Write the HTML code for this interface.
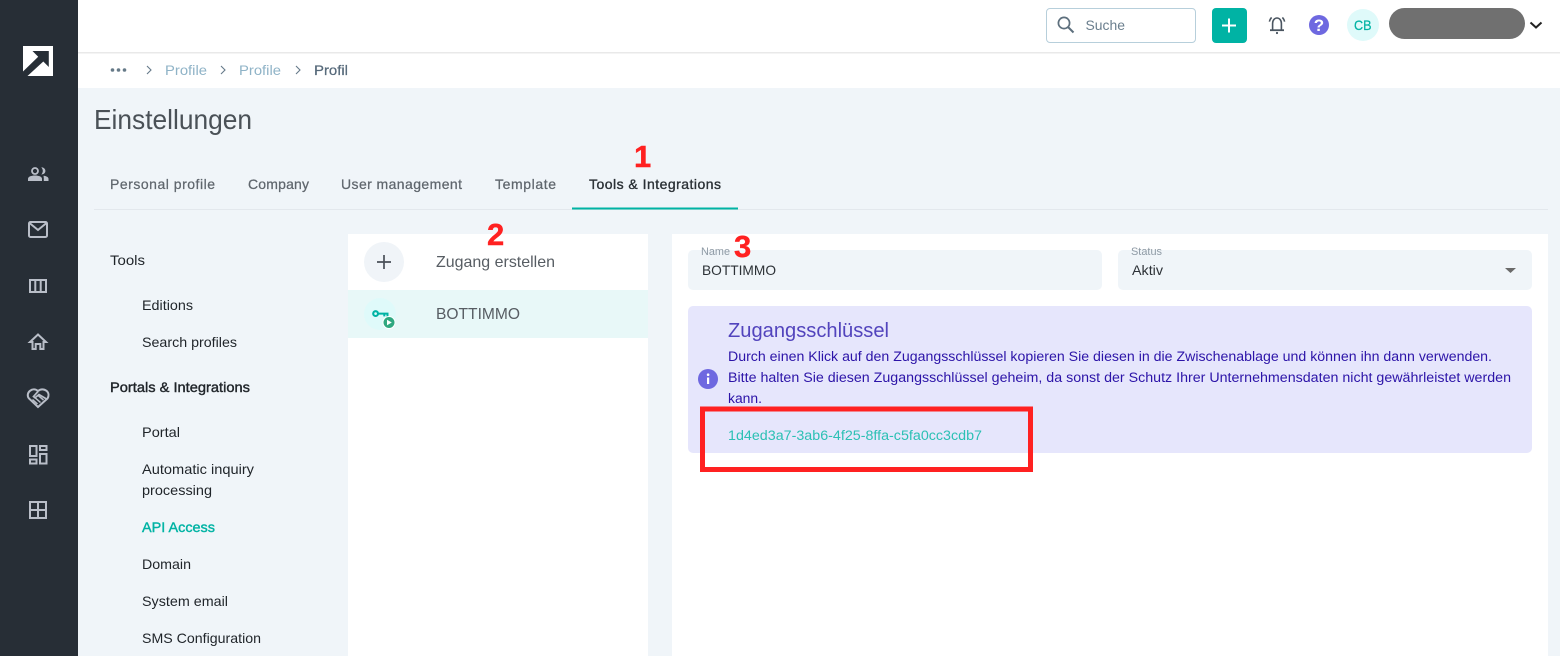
<!DOCTYPE html>
<html lang="de">
<head>
<meta charset="utf-8">
<title>Einstellungen</title>
<style>
html,body{margin:0;padding:0;width:1560px;height:656px;overflow:hidden;background:#f0f5f9}
svg{display:block}
text{font-family:"Liberation Sans",Arial,sans-serif;white-space:pre}
.m{stroke-width:.25px}
</style>
</head>
<body>
<svg width="1560" height="656" viewBox="0 0 1560 656" xmlns="http://www.w3.org/2000/svg">
  <rect width="1560" height="656" fill="#f0f5f9"/>
  <!-- top and breadcrumb -->
  <rect x="78" y="0" width="1482" height="88" fill="#fff"/>
  <rect x="78" y="52" width="1482" height="1.5" fill="#e9e9e9"/>
  <!-- sidebar -->
  <rect width="78" height="656" fill="#272e36"/>
  <rect x="23" y="46" width="30" height="30" fill="#fff"/>
  <path d="M32.5 51H48.8V67L43.3 61.5L27.5 76H23V71.5L38.2 56.7Z" fill="#272e36"/>
  <!-- people -->
  <circle cx="35" cy="171" r="3" fill="none" stroke="#b9bec8" stroke-width="1.8"/>
  <path d="M28 181V178.7C28 176.6 31.5 175.5 35 175.5S42 176.6 42 178.7V181Z" fill="#b9bec8"/>
  <path d="M41.3 167.2C44 167.4 45.4 169 45.4 170.9S44 174.4 41.3 174.6C42.5 173 42.8 172 42.8 170.9S42.5 168.8 41.3 167.2Z" fill="#b9bec8"/>
  <path d="M43.5 175.7C46.8 176 48.5 177.2 48.5 178.8V181H43.8V178.5C43.8 177.3 43.6 176.5 43.5 175.7Z" fill="#b9bec8"/>
  <g fill="none" stroke="#b9bec8" stroke-width="2">
    <!-- mail -->
    <rect x="29" y="222" width="18" height="15" rx="1.5"/>
    <path d="M29.5 223L38 230L46.5 223"/>
    <!-- columns -->
    <rect x="30" y="280" width="16" height="12"/>
    <path d="M35.3 280V292M40.7 280V292"/>
    <!-- home -->
    <path d="M30 342L38 334.5L46 342H43.5V349H40.3V344H35.7V349H32.5V342Z"/>
    <!-- handshake -->
    <path d="M38 407L29 398.5C27 396 27.5 392.8 30 390.8C32.5 388.8 35.5 388.8 38 391C40.5 388.8 44 388.8 46.5 390.8C49 393 49 396 47.5 398.5Z"/>
    <path d="M38 391.5L33.5 396.5L35 397.8L39 394.5L46.5 399" stroke-width="1.7"/>
    <path d="M32.5 399.5L37.5 404M35.2 397.8L40.5 402.5M38.2 395.5L43.5 400" stroke-width="1.5"/>
    <!-- dashboard -->
    <rect x="30" y="446" width="6.5" height="10"/>
    <rect x="40" y="446" width="6.5" height="4"/>
    <rect x="40" y="454" width="6.5" height="9.5"/>
    <rect x="30" y="459.5" width="6.5" height="4"/>
    <!-- grid -->
    <rect x="30" y="502" width="16" height="16"/>
    <path d="M38 502V518M30 510H46"/>
  </g>

  <!-- header controls -->
  <rect x="1046.5" y="8.5" width="149" height="34" rx="3.5" fill="#fff" stroke="#b7cfdb"/>
  <circle cx="1064" cy="23" r="5.6" fill="none" stroke="#5d6f7d" stroke-width="1.7"/>
  <path d="M1068 27L1073.5 32.5" stroke="#5d6f7d" stroke-width="2" fill="none"/>
  <text x="1085.5" y="30" font-size="14" fill="#6b7f8e" textLength="39.5" lengthAdjust="spacingAndGlyphs">Suche</text>
  <rect x="1212" y="8" width="35" height="35" rx="4" fill="#00b3a4"/>
  <path d="M1229 18.5V32.5M1222 25.5H1236" stroke="#fff" stroke-width="2"/>
  <g fill="none" stroke="#4a5560" stroke-width="1.6">
    <path d="M1272.6 29.5V23.5C1272.6 20.2 1274.6 18 1277 18S1281.4 20.2 1281.4 23.5V29.5"/>
    <path d="M1270 30.2H1284" stroke-width="1.8"/>
    <path d="M1269.4 21.6C1269.7 20 1270.4 18.7 1271.6 17.4M1284.6 21.6C1284.3 20 1283.6 18.7 1282.4 17.4"/>
  </g>
  <circle cx="1277" cy="33" r="1.1" fill="#4a5560"/>
  <circle cx="1319" cy="25" r="10" fill="#6e68e0"/>
  <text x="1319" y="31" font-size="17" font-weight="bold" fill="#fff" text-anchor="middle">?</text>
  <circle cx="1363" cy="25" r="16" fill="#dffafa"/>
  <text x="1354" y="30" font-size="14" fill="#00b3a4" stroke="#00b3a4" class="m" textLength="17.5" lengthAdjust="spacingAndGlyphs">CB</text>
  <rect x="1389" y="8" width="136" height="31" rx="15.5" fill="#707070"/>
  <path d="M1530.5 22.5L1536 27.5L1541.5 22.5" fill="none" stroke="#222" stroke-width="2"/>

  <!-- breadcrumb -->
  <circle cx="112.5" cy="70" r="1.8" fill="#667a88"/><circle cx="118.5" cy="70" r="1.8" fill="#667a88"/><circle cx="124.5" cy="70" r="1.8" fill="#667a88"/>
  <g fill="none" stroke="#66798a" stroke-width="1.1">
    <path d="M147 66L151 70L147 74M221 66L225 70L221 74M296 66L300 70L296 74"/>
  </g>
  <text x="165" y="75" font-size="14" fill="#8fb3c7" textLength="42" lengthAdjust="spacingAndGlyphs">Profile</text>
  <text x="239" y="75" font-size="14" fill="#8fb3c7" textLength="42" lengthAdjust="spacingAndGlyphs">Profile</text>
  <text x="314" y="75" font-size="14" fill="#56697a" stroke="#56697a" class="m" textLength="34" lengthAdjust="spacingAndGlyphs">Profil</text>

  <text x="94" y="129" font-size="28" fill="#4a5157" textLength="158" lengthAdjust="spacingAndGlyphs">Einstellungen</text>

  <!-- tabs -->
  <g font-size="14" fill="#5f666d" stroke="#5f666d" class="m">
    <text x="110" y="189" class="m" textLength="105" lengthAdjust="spacing">Personal profile</text>
    <text x="248" y="189" class="m" textLength="61" lengthAdjust="spacing">Company</text>
    <text x="341" y="189" class="m" textLength="121" lengthAdjust="spacing">User management</text>
    <text x="495" y="189" class="m" textLength="61" lengthAdjust="spacing">Template</text>
  </g>
  <text x="589" y="189" font-size="14" fill="#2b3136" stroke="#2b3136" stroke-width=".35" textLength="132" lengthAdjust="spacing">Tools &amp; Integrations</text>
  <rect x="94" y="209" width="1454" height="1" fill="#e3e8ed"/>
  <rect x="572" y="207.5" width="166" height="2" fill="#00b3a4"/>

  <!-- left menu -->
  <g font-size="14" fill="#1f2429">
    <text x="110" y="265" textLength="35" lengthAdjust="spacingAndGlyphs">Tools</text>
    <text x="142" y="310" textLength="51" lengthAdjust="spacingAndGlyphs">Editions</text>
    <text x="142" y="347" textLength="95" lengthAdjust="spacingAndGlyphs">Search profiles</text>
    <text x="110" y="392" stroke="#23282d" stroke-width=".4" textLength="140" lengthAdjust="spacingAndGlyphs">Portals &amp; Integrations</text>
    <text x="142" y="437" textLength="38" lengthAdjust="spacingAndGlyphs">Portal</text>
    <text x="142" y="474" textLength="112" lengthAdjust="spacingAndGlyphs">Automatic inquiry</text>
    <text x="142" y="495" textLength="70" lengthAdjust="spacingAndGlyphs">processing</text>
    <text x="142" y="532" fill="#00b3a4" stroke="#00b3a4" stroke-width=".4" textLength="73" lengthAdjust="spacingAndGlyphs">API Access</text>
    <text x="142" y="569" textLength="49" lengthAdjust="spacingAndGlyphs">Domain</text>
    <text x="142" y="606" textLength="86" lengthAdjust="spacingAndGlyphs">System email</text>
    <text x="142" y="643" textLength="119" lengthAdjust="spacingAndGlyphs">SMS Configuration</text>
  </g>

  <!-- list panel -->
  <rect x="348" y="234" width="300" height="422" fill="#fff"/>
  <rect x="348" y="290" width="300" height="48" fill="#e8f8f8"/>
  <circle cx="384" cy="262" r="20" fill="#f0f4f8"/>
  <path d="M384 255V269M377 262H391" stroke="#4a5058" stroke-width="1.7" fill="none"/>
  <text x="436" y="267" font-size="16" fill="#575d63" textLength="119" lengthAdjust="spacingAndGlyphs">Zugang erstellen</text>
  <text x="436" y="319" font-size="16" fill="#575d63" textLength="84" lengthAdjust="spacingAndGlyphs">BOTTIMMO</text>
  <circle cx="380" cy="314" r="16" fill="#dffafa"/>
  <circle cx="375.6" cy="313.6" r="2.4" fill="none" stroke="#00b3a4" stroke-width="2.1"/>
  <path d="M378 313.6H387.5V317.2M384.3 313.6V316.4" fill="none" stroke="#00b3a4" stroke-width="2"/>
  <circle cx="389" cy="322.5" r="6.5" fill="#fff"/>
  <circle cx="389" cy="322.5" r="5.5" fill="#2fa880"/>
  <path d="M387 319.8L391.8 322.5L387 325.2Z" fill="#fff"/>

  <!-- detail panel -->
  <rect x="672" y="234" width="876" height="422" fill="#fff"/>
  <rect x="688" y="250" width="414" height="40" rx="5" fill="#f0f5f9"/>
  <rect x="1118" y="250" width="414" height="40" rx="5" fill="#f0f5f9"/>
  <text x="701" y="255" font-size="11" fill="#8e9aa5" textLength="29" lengthAdjust="spacingAndGlyphs">Name</text>
  <text x="702" y="275" font-size="14" fill="#2d3237" textLength="74" lengthAdjust="spacingAndGlyphs">BOTTIMMO</text>
  <text x="1131" y="255" font-size="11" fill="#8e9aa5" textLength="31" lengthAdjust="spacingAndGlyphs">Status</text>
  <text x="1132" y="275" font-size="14" fill="#2d3237" textLength="31" lengthAdjust="spacingAndGlyphs">Aktiv</text>
  <path d="M1505 268H1516L1510.5 273Z" fill="#6a6a6a"/>

  <rect x="688" y="306" width="844" height="147" rx="5" fill="#e6e6fc"/>
  <circle cx="708" cy="379" r="10" fill="#6e68e0"/>
  <rect x="707" y="377.5" width="2.2" height="6.5" fill="#fff"/>
  <circle cx="708.1" cy="374.7" r="1.3" fill="#fff"/>
  <text x="728" y="337" font-size="20" fill="#5244bd" textLength="161" lengthAdjust="spacingAndGlyphs">Zugangsschlüssel</text>
  <g font-size="13.5" fill="#2c14a8">
    <text x="728" y="361" textLength="764" lengthAdjust="spacingAndGlyphs">Durch einen Klick auf den Zugangsschlüssel kopieren Sie diesen in die Zwischenablage und können ihn dann verwenden.</text>
    <text x="728" y="382" textLength="783" lengthAdjust="spacingAndGlyphs">Bitte halten Sie diesen Zugangsschlüssel geheim, da sonst der Schutz Ihrer Unternehmensdaten nicht gewährleistet werden</text>
    <text x="728" y="403" textLength="34" lengthAdjust="spacingAndGlyphs">kann.</text>
  </g>
  <text x="728" y="440" font-size="13.5" fill="#2cc0b4" textLength="254" lengthAdjust="spacingAndGlyphs">1d4ed3a7-3ab6-4f25-8ffa-c5fa0cc3cdb7</text>

  <!-- annotations -->
  <rect x="702.5" y="409" width="328" height="60.5" fill="none" stroke="#ff2121" stroke-width="5"/>
  <g font-size="31" font-weight="bold" fill="#ff2121" stroke="#ff2121" stroke-width=".4">
    <text x="634" y="167">1</text>
    <text x="487" y="245">2</text>
    <text x="734" y="257">3</text>
  </g>
</svg>
</body>
</html>
